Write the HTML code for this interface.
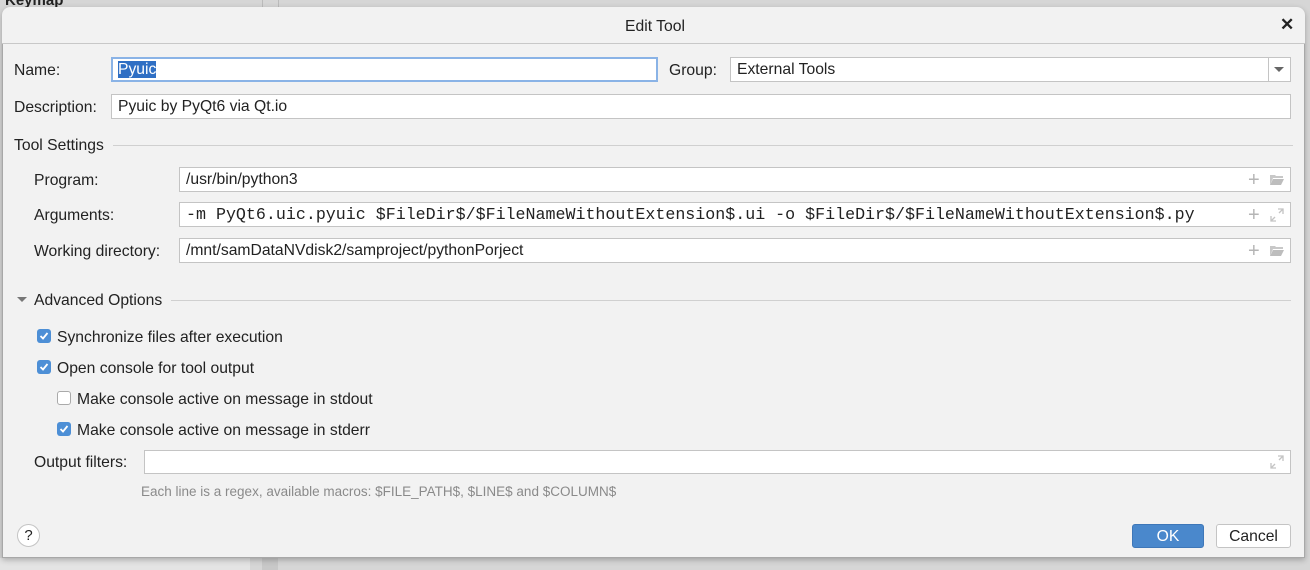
<!DOCTYPE html>
<html><head><meta charset="utf-8"><style>
*{box-sizing:border-box;margin:0;padding:0}
body{width:1310px;height:570px;overflow:hidden;background:#d6d6d6;font-family:"Liberation Sans",sans-serif;font-size:15.7px;color:#222;position:relative}
.a{position:absolute;white-space:nowrap}
.dlg{position:absolute;left:2px;top:7px;width:1303px;height:551px;background:#f2f2f2;border:1px solid #a8a8a8;border-radius:8px 8px 0 0;box-shadow:0 2px 6px rgba(0,0,0,.25)}
.title{position:absolute;left:2px;top:7px;width:1303px;height:37px;border-bottom:1px solid #c8c8c8;background:#f2f2f2;border-radius:8px 8px 0 0}
.in{position:absolute;background:#fff;border:1px solid #c4c4c4;height:25px;padding-left:6px;line-height:24px}
.mono{font-family:"Liberation Mono",monospace;font-size:16.65px}
.cb{position:absolute;width:14px;height:14px;border-radius:3px;background:#4d8fd6}
.cb svg{position:absolute;left:1px;top:1px}
.ico{position:absolute;color:#b5b5b5;font-size:20px;line-height:20px}
</style></head><body>
<div class="a" style="left:5px;top:-8px;font-weight:bold;font-size:15px">Keymap</div>
<div class="a" style="left:262px;top:0;width:1px;height:8px;background:#bbb"></div>
<div class="a" style="left:278px;top:0;width:1px;height:8px;background:#bbb"></div>
<div class="a" style="left:0;top:558px;width:250px;height:12px;background:#e4e4e4"></div>
<div class="a" style="left:262px;top:558px;width:16px;height:12px;background:#c8c8c8"></div>
<div class="dlg"></div>
<div class="title"></div>
<div class="a" style="left:0;width:1310px;top:18px;text-align:center;font-size:15.7px">Edit Tool</div>
<div class="a" style="left:1280px;top:15px;font-size:17px;font-weight:bold">✕</div>

<div class="a" style="left:14px;top:62px">Name:</div>
<div class="in" style="left:111px;top:57px;width:547px;border:2px solid #8ab3e6;line-height:22px;padding-left:5px"><span style="background:#2f6fc4;color:#fff">Pyuic</span></div>
<div class="a" style="left:669px;top:62px">Group:</div>
<div class="in" style="left:730px;top:57px;width:561px">External Tools</div>
<div class="a" style="left:1268px;top:57px;width:1px;height:25px;background:#c4c4c4"></div>
<div class="a" style="left:1274px;top:67px;width:0;height:0;border-left:5px solid transparent;border-right:5px solid transparent;border-top:5px solid #666"></div>

<div class="a" style="left:14px;top:99px">Description:</div>
<div class="in" style="left:111px;top:94px;width:1180px">Pyuic by PyQt6 via Qt.io</div>

<div class="a" style="left:14px;top:137px">Tool Settings</div>
<div class="a" style="left:113px;top:145px;width:1180px;height:1px;background:#d0d0d0"></div>

<div class="a" style="left:34px;top:172px">Program:</div>
<div class="in" style="left:179px;top:167px;width:1112px">/usr/bin/python3</div>
<div class="ico" style="left:1248px;top:170px">+</div>
<svg class="a" style="left:1269px;top:173px" width="16" height="13"><path d="M1 2h5l1 1h7v2H4L1 12z" fill="#c8c8c8"/><path d="M4 6h11l-3 6H1z" fill="#bdbdbd"/></svg>

<div class="a" style="left:34px;top:207px">Arguments:</div>
<div class="in mono" style="left:179px;top:202px;width:1112px">-m PyQt6.uic.pyuic $FileDir$/$FileNameWithoutExtension$.ui -o $FileDir$/$FileNameWithoutExtension$.py</div>
<div class="ico" style="left:1248px;top:205px">+</div>
<svg class="a" style="left:1270px;top:208px" width="14" height="14"><path d="M8 1h5v5M13 1L9 5M6 13H1V8M1 13l4-4" stroke="#c4c4c4" fill="none" stroke-width="1.3"/></svg>

<div class="a" style="left:34px;top:243px">Working directory:</div>
<div class="in" style="left:179px;top:238px;width:1112px">/mnt/samDataNVdisk2/samproject/pythonPorject</div>
<div class="ico" style="left:1248px;top:241px">+</div>
<svg class="a" style="left:1269px;top:244px" width="16" height="13"><path d="M1 2h5l1 1h7v2H4L1 12z" fill="#c8c8c8"/><path d="M4 6h11l-3 6H1z" fill="#bdbdbd"/></svg>

<div class="a" style="left:17px;top:297px;width:0;height:0;border-left:5px solid transparent;border-right:5px solid transparent;border-top:5px solid #777"></div>
<div class="a" style="left:34px;top:292px">Advanced Options</div>
<div class="a" style="left:171px;top:300px;width:1120px;height:1px;background:#d0d0d0"></div>

<div class="cb" style="left:37px;top:329px"><svg width="12" height="12"><path d="M2.5 6l2.5 2.5 4.5-5.5" stroke="#fff" stroke-width="1.8" fill="none"/></svg></div>
<div class="a" style="left:57px;top:329px">Synchronize files after execution</div>
<div class="cb" style="left:37px;top:360px"><svg width="12" height="12"><path d="M2.5 6l2.5 2.5 4.5-5.5" stroke="#fff" stroke-width="1.8" fill="none"/></svg></div>
<div class="a" style="left:57px;top:360px">Open console for tool output</div>
<div class="cb" style="left:57px;top:391px;background:#fff;border:1px solid #aaa"></div>
<div class="a" style="left:77px;top:391px">Make console active on message in stdout</div>
<div class="cb" style="left:57px;top:422px"><svg width="12" height="12"><path d="M2.5 6l2.5 2.5 4.5-5.5" stroke="#fff" stroke-width="1.8" fill="none"/></svg></div>
<div class="a" style="left:77px;top:422px">Make console active on message in stderr</div>

<div class="a" style="left:34px;top:454px">Output filters:</div>
<div class="in" style="left:144px;top:450px;width:1147px;height:24px"></div>
<svg class="a" style="left:1270px;top:455px" width="14" height="14"><path d="M8 1h5v5M13 1L9 5M6 13H1V8M1 13l4-4" stroke="#c4c4c4" fill="none" stroke-width="1.3"/></svg>
<div class="a" style="left:141px;top:484px;font-size:13.5px;color:#8a8a8a">Each line is a regex, available macros: $FILE_PATH$, $LINE$ and $COLUMN$</div>

<div class="a" style="left:17px;top:524px;width:23px;height:23px;border-radius:50%;border:1px solid #c4c4c4;background:#fff;text-align:center;line-height:21px;font-size:15px">?</div>
<div class="a" style="left:1132px;top:524px;width:72px;height:24px;border-radius:3px;background:#4a88cc;border:1px solid #3e77b8;color:#fff;text-align:center;line-height:23px">OK</div>
<div class="a" style="left:1216px;top:524px;width:75px;height:24px;border-radius:3px;background:#fff;border:1px solid #c4c4c4;text-align:center;line-height:23px">Cancel</div>
</body></html>
